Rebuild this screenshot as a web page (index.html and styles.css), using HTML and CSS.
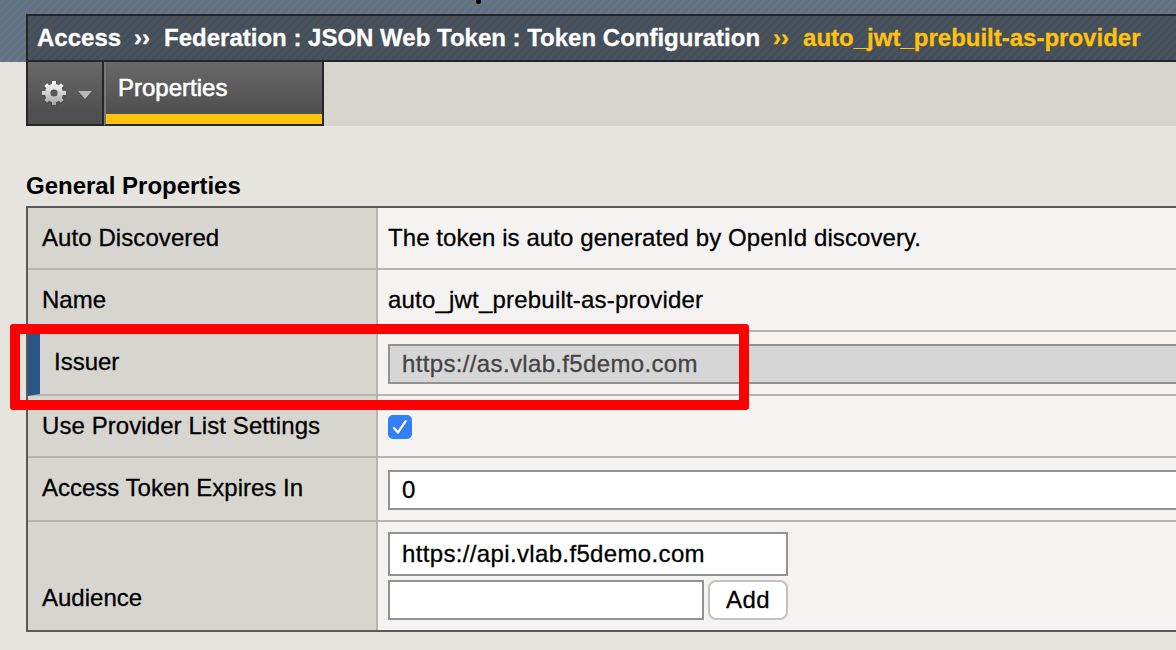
FILE: index.html
```html
<!DOCTYPE html>
<html lang="en">
<head>
<meta charset="utf-8">
<title>Token Configuration</title>
<link rel="stylesheet" href="styles.css">
</head>
<body>
<header class="masthead">
  <span class="notch"></span>
  <nav class="crumbs">
    <span class="crumb-access">Access</span><span class="sep sep-first">››</span><span class="crumb-path">Federation : JSON Web Token : Token Configuration</span><span class="sep sep-current">››</span><span class="crumb-current">auto_jwt_prebuilt-as-provider</span>
  </nav>
</header>
<div class="tabbar">
  <div class="tab-gear">
    <svg class="gear" width="26" height="28" viewBox="-13 -13 26 28">
      <defs>
        <linearGradient id="metal" gradientUnits="userSpaceOnUse" x1="0" y1="-12" x2="0" y2="12">
          <stop offset="0" stop-color="#fff"/><stop offset="1" stop-color="#a4a4a4"/>
        </linearGradient>
      </defs>
      <g fill="none" stroke="#484848" opacity=".65">
        <circle cy="1" r="6.6" stroke-width="7"/>
        <path stroke-width="6" d="M0-12V-8M0 9V13M-12 1H-8M8 1H12M-8.5-7.5-6-5M6 7 8.5 9.5M8.5-7.5 6-5M-6 7-8.5 9.5"/>
      </g>
      <g fill="none" stroke="url(#metal)">
        <circle r="6.4" stroke-width="5.6"/>
        <path stroke-width="4" d="M.01-12 0-7M.01 7 0 12M-12 .01-7 0M7 .01 12 0M-8.3-8.3-5-5M5 5 8.3 8.3M8.3-8.3 5-5M-5 5-8.3 8.3"/>
      </g>
    </svg>
    <svg class="caret" width="16" height="10" viewBox="0 0 16 10"><path d="M0 0H16L8 9Z" fill="#4c4c4c"/><path d="M1 0H15L8 8Z" fill="#b9b9b9"/></svg>
  </div>
  <div class="tab-props"><span class="tab-label">Properties</span></div>
</div>
<main class="content">
  <h1 class="heading"><span class="heading-text">General Properties</span></h1>
  <div class="grid">
    <div class="label"><span class="t-auto">Auto Discovered</span></div>
    <div class="value"><span class="t-token">The token is auto generated by OpenId discovery.</span></div>
    <div class="label"><span class="t-name">Name</span></div>
    <div class="value"><span class="t-jwt">auto_jwt_prebuilt-as-provider</span></div>
    <div class="label required"><span class="t-issuer">Issuer</span></div>
    <div class="value fields"><div class="input wide disabled"><span class="t-url">https://as.vlab.f5demo.com</span></div></div>
    <div class="label"><span class="t-use">Use Provider List Settings</span></div>
    <div class="value check-cell"><svg width="24" height="24" viewBox="0 0 24 24"><rect width="24" height="24" rx="5" fill="#3180f8"/><path d="M6 14 10 18.4 17.7 7" fill="none" stroke="#1c62c9" stroke-width="2.6" stroke-linecap="round" stroke-linejoin="round"/><path d="M6 13.2 10 17.6 17.7 6.2" fill="none" stroke="#fff" stroke-width="2.4" stroke-linecap="round" stroke-linejoin="round"/></svg></div>
    <div class="label"><span class="t-expires">Access Token Expires In</span></div>
    <div class="value fields"><div class="input wide"><span>0</span></div></div>
    <div class="label low"><span class="t-audience">Audience</span></div>
    <div class="value fields last">
      <div class="input listbox"><span class="t-url">https://api.vlab.f5demo.com</span></div>
      <div class="add-row"><div class="input entry"></div><button class="add"><span class="t-add">Add</span></button></div>
    </div>
  </div>
</main>
<div class="highlight"></div>
</body>
</html>
```
FILE: styles.css
```css
* { box-sizing: border-box; }
body {
  margin: 0;
  width: 1176px;
  height: 650px;
  overflow: hidden;
  position: relative;
  background: #e5e4df;
  color: #000;
  font: 24px/28px "Liberation Sans", Arial, sans-serif;
  white-space: nowrap;
}
.masthead {
  height: 62px;
  padding: 14px 0 0 26px;
  background: repeating-linear-gradient(135deg, #607080 0, #687889 2.83px, #607080 5.66px);
}
.notch { position: absolute; left: 476px; top: 0; width: 5px; height: 4px; background: #000; border-radius: 0 0 2px 2px; }
.crumbs {
  height: 48px;
  display: flex;
  align-items: center;
  padding-left: 10px;
  border: 2px solid #262626;
  border-right: 0;
  background: repeating-linear-gradient(135deg, #434d58 0, #49545f 2.83px, #434d58 5.66px);
  color: #fff;
  font-weight: bold;
  -webkit-text-stroke: .3px;
}
.crumb-access { margin-left: -1px; }
.sep { width: 16px; margin: 0 13px; }
.sep-first { margin-right: 14px; }
.sep-current, .crumb-current { color: #ffc20e; }
.crumb-current { margin-left: 1px; }
.tabbar { height: 64px; margin-left: 26px; display: flex; background: #d6d5d0; }
.tab-gear {
  width: 78px;
  display: flex;
  padding: 18px 0 0 13px;
  gap: 10px;
  border: 2px solid #262626;
  border-top: 0;
  background: linear-gradient(#696969, #505050 80%);
}
.caret { margin-top: 11px; }
.tab-props {
  width: 220px;
  padding: 12px 0 0 12px;
  border: 2px solid #262626;
  border-width: 0 2px 2px 0;
  border-left: 2px solid #777;
  background: linear-gradient(#ffc20e, #ffc20e) 0 100% / 100% 10px no-repeat, linear-gradient(#696969, #505050 80%);
  color: #fff;
  -webkit-text-stroke: .6px #fff;
}
.content { padding: 46px 0 0 26px; }
.heading { margin: 0; height: 34px; font-size: 24px; line-height: 28px; font-weight: bold; }
.grid {
  display: grid;
  grid-template-columns: 350px 1fr;
  grid-template-rows: 62px 62px 64px 62px 64px 108px;
  border: 2px solid #5a5a5a;
  border-right: 0;
  -webkit-text-stroke: .3px;
}
.label {
  padding: 16px 0 0 14px;
  background: #d6d5d0;
  border: solid #b5b4ae;
  border-width: 0 2px 2px 0;
}
.value { padding: 16px 0 0 10px; background: #f5f3f2; border-bottom: 2px solid #b5b4ae; }
.required { border-left: 12px solid #2b5587; }
.label.low { padding-top: 62px; border-bottom: 0; }
.fields { padding-top: 12px; }
.last { padding-top: 10px; border-bottom: 0; }
.check-cell { padding-top: 19px; }
.check-cell svg { display: block; }
.input { height: 40px; border: 2px solid #929292; background: #fff; padding: 4px 0 0 12px; }
.wide { border-right: 0; }
.disabled { background: #d6d6d6; color: #444; }
.listbox { width: 400px; height: 44px; padding-top: 6px; }
.add-row { display: flex; gap: 4px; margin-top: 4px; }
.entry { width: 316px; }
.add { width: 80px; height: 40px; padding: 0; border: 2px solid #c0c0c0; border-radius: 8px; background: #fff; color: #000; font: inherit; }
.t-auto, .t-token, .t-use { letter-spacing: .08px; }
.t-jwt { letter-spacing: .2px; }
.t-url { letter-spacing: .35px; }
.t-add { letter-spacing: .4px; }
.highlight { position: absolute; left: 10px; top: 324px; width: 739px; height: 86px; border: 10px solid #f00; border-radius: 3px; }
```
